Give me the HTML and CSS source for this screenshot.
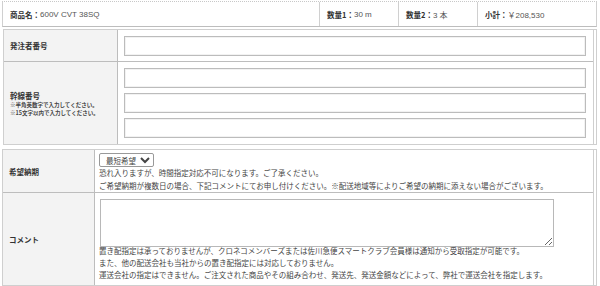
FILE: index.html
```html
<!DOCTYPE html>
<html lang="ja">
<head>
  <meta charset="UTF-8">
  <meta name="viewport" content="width=device-width, initial-scale=1.0">
  <title>ご注文内容</title>
  <link rel="stylesheet" href="styles.css">
</head>
<body>
  <div class="summary">
    <div class="summary-item item-name"><b>商品名：</b>600V CVT 38SQ</div>
    <div class="summary-item item-qty"><b>数量1：</b>30 m</div>
    <div class="summary-item item-qty"><b>数量2：</b>3 本</div>
    <div class="summary-item item-total"><b>小計：</b>￥208,530</div>
  </div>

  <div class="box box-numbers">
    <div class="form-table numbers">
      <div class="th">発注者番号</div>
      <div class="td">
        <input type="text" class="text-input">
      </div>
      <div class="th">
        <div>幹線番号</div>
        <div class="note">※半角英数字で入力してください。</div>
        <div class="note">※15文字以内で入力してください。</div>
      </div>
      <div class="td stack">
        <input type="text" class="text-input">
        <input type="text" class="text-input">
        <input type="text" class="text-input">
      </div>
    </div>
  </div>

  <div class="box box-delivery">
    <div class="form-table delivery">
      <div class="th">希望納期</div>
      <div class="td">
        <select class="date-select">
          <option>最短希望</option>
        </select>
        <p class="help">恐れ入りますが、時間指定対応不可になります。ご了承ください。</p>
        <p class="help">ご希望納期が複数日の場合、下記コメントにてお申し付けください。※配送地域等によりご希望の納期に添えない場合がございます。</p>
      </div>
      <div class="th">コメント</div>
      <div class="td">
        <textarea class="comment"></textarea>
        <p class="help help-tight">置き配指定は承っておりませんが、クロネコメンバーズまたは佐川急便スマートクラブ会員様は通知から受取指定が可能です。</p>
        <p class="help help-tight">また、他の配送会社も当社からの置き配指定には対応しておりません。</p>
        <p class="help help-tight">運送会社の指定はできません。ご注文された商品やその組み合わせ、発送先、発送金額などによって、弊社で運送会社を指定します。</p>
      </div>
    </div>
  </div>
</body>
</html>
```

FILE: styles.css
```css
body {
  margin: 0;
  width: 600px;
  font-family: "Noto Sans CJK JP", "Liberation Sans", sans-serif;
  font-size: 7.5px;
  color: #444;
  background: #fff;
}
b {
  color: #333;
}
.summary {
  display: flex;
  height: 24px;
  margin: 1px 3px 0 2px;
  border-top: 1px dotted #c8c8c8;
  border-left: 1px solid #d0d0d0;
  border-right: 1px solid #d0d0d0;
  border-bottom: 1px solid #bdbdbd;
}
.summary-item {
  display: flex;
  align-items: center;
  padding-left: 7px;
  font-family: "Liberation Sans", "Noto Sans CJK JP", sans-serif;
  font-size: 8px;
  color: #555;
  box-sizing: border-box;
}
.summary-item b {
  font-family: "Noto Sans CJK JP", sans-serif;
  font-size: 7.5px;
}
.item-name {
  width: 316px;
}
.item-qty {
  width: 79px;
  border-left: 1px solid #d0d0d0;
}
.item-total {
  flex: 1;
  border-left: 1px solid #d0d0d0;
}
.box {
  border: 1px solid #cfcfcf;
  padding-right: 2px;
}
.box-numbers {
  margin: 2px 3px 0 3px;
}
.box-delivery {
  margin: 4px 3px 0 2px;
}
.form-table {
  display: grid;
  border-right: 1px solid #cfcfcf;
}
.numbers {
  grid-template-columns: 114px 1fr;
  grid-template-rows: 32px 82px;
}
.delivery {
  grid-template-columns: 92px 1fr;
  grid-template-rows: 43px 92px;
}
.th {
  display: flex;
  flex-direction: column;
  justify-content: center;
  padding-left: 6px;
  background: #f3f3f3;
  border-right: 1px solid #bdbdbd;
  font-weight: bold;
  color: #333;
}
.form-table .th:first-child,
.form-table .th:first-child + .td {
  border-bottom: 1px solid #bdbdbd;
}
.note {
  font-size: 5.5px;
  line-height: 8px;
  color: #444;
}
.th .note:first-of-type {
  margin-top: 2px;
}
.td {
  padding: 0 7px 0 6px;
  display: flex;
  flex-direction: column;
}
.numbers .td {
  justify-content: center;
}
.stack {
  gap: 5px;
}
.text-input {
  height: 20px;
  margin: 0;
  border: 1px solid #bcbcbc;
  box-shadow: inset 0 0 0 1px #f2f2f2;
  box-sizing: border-box;
  width: 100%;
}
.delivery .td {
  padding: 3px 0 0 4px;
}
.date-select {
  width: 55px;
  height: 14px;
  margin: 0;
  padding: 0 0 0 2px;
  font-family: "Noto Sans CJK JP", sans-serif;
  font-size: 7.5px;
  color: #444;
  border: 1px solid #999;
  border-radius: 2px;
  background: #fff;
}
.help {
  margin: 0;
  line-height: 12.5px;
  white-space: nowrap;
}
.help-tight {
  line-height: 12px;
}
.comment {
  width: 454px;
  height: 48px;
  margin: 3px 0 -2px 1px;
  border: 1px solid #b8b8b8;
  box-sizing: border-box;
}
```
